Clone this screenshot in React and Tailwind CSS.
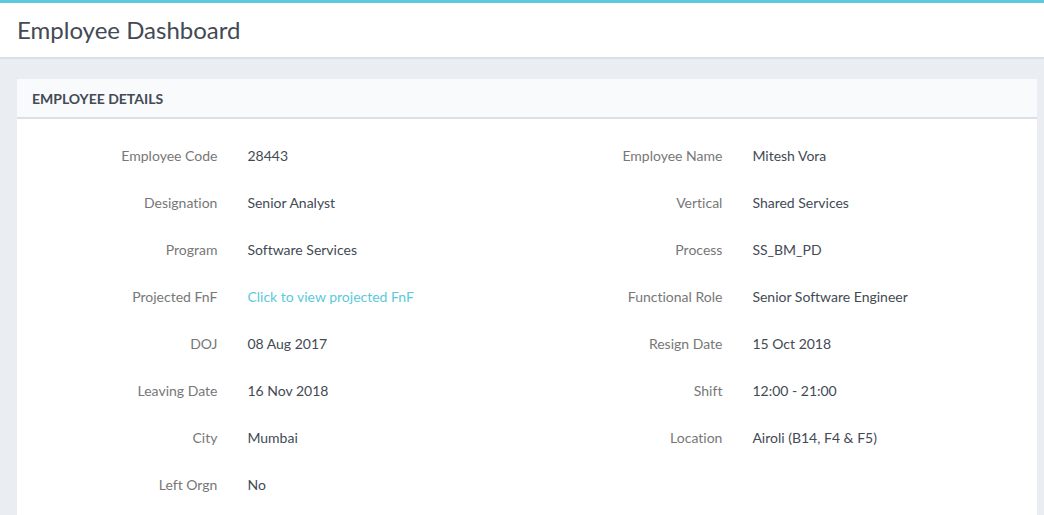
const left = [
  ["Employee Code", "28443"],
  ["Designation", "Senior Analyst"],
  ["Program", "Software Services"],
  ["Projected FnF", "Click to view projected FnF", true],
  ["DOJ", "08 Aug 2017"],
  ["Leaving Date", "16 Nov 2018"],
  ["City", "Mumbai"],
  ["Left Orgn", "No"],
];

const right = [
  ["Employee Name", "Mitesh Vora"],
  ["Vertical", "Shared Services"],
  ["Process", "SS_BM_PD"],
  ["Functional Role", "Senior Software Engineer"],
  ["Resign Date", "15 Oct 2018"],
  ["Shift", "12:00 - 21:00"],
  ["Location", "Airoli (B14, F4 & F5)"],
];

function DetailList({ items }) {
  return (
    <dl className="flex flex-1 flex-col gap-[27px]">
      {items.map(([label, value, isLink]) => (
        <div key={label} className="flex leading-5">
          <dt className="w-5/12 pr-[15px] text-right text-[#777777]">{label}</dt>
          <dd className="flex-1 pl-[15px] text-[#434a54]">
            {isLink ? (
              <a href="#projected-fnf" className="text-[#5bc9dc]">
                {value}
              </a>
            ) : (
              value
            )}
          </dd>
        </div>
      ))}
    </dl>
  );
}

export default function App() {
  return (
    <div className="flex min-h-screen flex-col bg-[#eaedf2] font-['Lato',sans-serif] text-sm [font-variant-ligatures:none]">
      <header className="border-t-[3px] border-b-2 border-t-[#5bcbdd] border-b-[#d9e0e8] bg-white px-[17px] py-3">
        <h1 className="text-2xl leading-[30px] text-[#434a54]">Employee Dashboard</h1>
      </header>
      <main className="flex flex-1 flex-col pt-5 pr-[7px] pl-[17px]">
        <section className="flex-1 bg-white">
          <h2 className="border-b-2 border-[#d9e0e8] bg-[#f9fafc] px-[15px] pt-[10px] pb-2 font-bold leading-5 text-[#434a54]">
            EMPLOYEE DETAILS
          </h2>
          <div className="flex px-[5px] pt-[27px]">
            <DetailList items={left} />
            <DetailList items={right} />
          </div>
        </section>
      </main>
    </div>
  );
}
